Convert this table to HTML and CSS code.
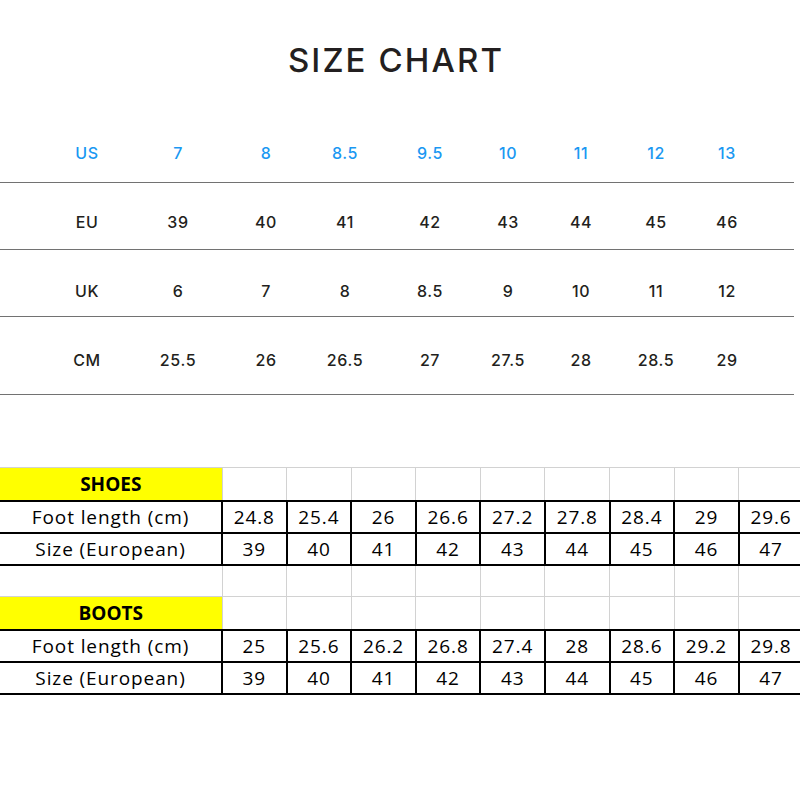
FILE: index.html
```html
<!DOCTYPE html>
<html lang="en">
<head>
<meta charset="utf-8">
<title>Size Chart</title>
<link rel="stylesheet" href="styles.css">
</head>
<body>
<main class="page">
  <h1 class="title">SIZE CHART</h1>

  <section class="chart">
    <div class="row row-us">
      <span>US</span><span>7</span><span>8</span><span>8.5</span><span>9.5</span><span>10</span><span>11</span><span>12</span><span>13</span>
    </div>
    <div class="row row-eu">
      <span>EU</span><span>39</span><span>40</span><span>41</span><span>42</span><span>43</span><span>44</span><span>45</span><span>46</span>
    </div>
    <div class="row row-uk">
      <span>UK</span><span>6</span><span>7</span><span>8</span><span>8.5</span><span>9</span><span>10</span><span>11</span><span>12</span>
    </div>
    <div class="row row-cm">
      <span>CM</span><span>25.5</span><span>26</span><span>26.5</span><span>27</span><span>27.5</span><span>28</span><span>28.5</span><span>29</span>
    </div>
  </section>

  <table class="sheet">
    <colgroup>
      <col class="c-label">
      <col class="c-val"><col class="c-val"><col class="c-val"><col class="c-val"><col class="c-val"><col class="c-val"><col class="c-val"><col class="c-val"><col class="c-val">
    </colgroup>
    <tbody>
      <tr class="r-head">
        <th class="tag">SHOES</th>
        <td></td><td></td><td></td><td></td><td></td><td></td><td></td><td></td><td></td>
      </tr>
      <tr class="r-data r1">
        <td class="d label">Foot length (cm)</td>
        <td class="d">24.8</td><td class="d">25.4</td><td class="d">26</td><td class="d">26.6</td><td class="d">27.2</td><td class="d">27.8</td><td class="d">28.4</td><td class="d">29</td><td class="d">29.6</td>
      </tr>
      <tr class="r-data r2">
        <td class="d label">Size (European)</td>
        <td class="d">39</td><td class="d">40</td><td class="d">41</td><td class="d">42</td><td class="d">43</td><td class="d">44</td><td class="d">45</td><td class="d">46</td><td class="d">47</td>
      </tr>
      <tr class="r-blank">
        <td class="blank-label"></td>
        <td></td><td></td><td></td><td></td><td></td><td></td><td></td><td></td><td></td>
      </tr>
      <tr class="r-head">
        <th class="tag">BOOTS</th>
        <td></td><td></td><td></td><td></td><td></td><td></td><td></td><td></td><td></td>
      </tr>
      <tr class="r-data r1">
        <td class="d label">Foot length (cm)</td>
        <td class="d">25</td><td class="d">25.6</td><td class="d">26.2</td><td class="d">26.8</td><td class="d">27.4</td><td class="d">28</td><td class="d">28.6</td><td class="d">29.2</td><td class="d">29.8</td>
      </tr>
      <tr class="r-data r2">
        <td class="d label">Size (European)</td>
        <td class="d">39</td><td class="d">40</td><td class="d">41</td><td class="d">42</td><td class="d">43</td><td class="d">44</td><td class="d">45</td><td class="d">46</td><td class="d">47</td>
      </tr>
    </tbody>
  </table>
</main>
</body>
</html>
```

FILE: styles.css
```css
html, body {
  margin: 0;
  padding: 0;
  background: #ffffff;
  overflow: hidden;
}

.page {
  width: 800px;
  height: 800px;
  overflow: hidden;
}

.title {
  margin: 0;
  padding-top: 40px;
  height: 40px;
  line-height: 40px;
  text-align: center;
  font-family: "Inter", "Noto Sans", sans-serif;
  font-weight: 500;
  font-size: 33px;
  letter-spacing: 2.1px;
  color: #231f20;
  padding-right: 8px;
}

.chart {
  margin-top: 44px;
  width: 794px;
  font-family: "Inter", "Noto Sans", sans-serif;
  font-size: 16px;
  font-weight: 500;
  letter-spacing: 0.6px;
  color: #231f20;
}

.row {
  display: grid;
  grid-template-columns: 80px 102px 74px 84px 86px 70px 76px 74px 68px;
  padding-left: 47px;
  align-items: center;
  justify-items: center;
  border-bottom: 1px solid #727272;
  box-sizing: border-box;
}

.row-us {
  height: 59px;
  color: #1a98f2;
}

.row-eu {
  height: 67px;
  padding-top: 12px;
}

.row-uk {
  height: 67px;
  padding-top: 16px;
}

.row-cm {
  height: 78px;
  padding-top: 9px;
}

.sheet {
  margin-top: 72px;
  border-collapse: collapse;
  table-layout: fixed;
  width: 804px;
  font-family: "Open Sans", "Noto Sans", sans-serif;
  font-size: 19px;
  letter-spacing: 0.9px;
  color: #000000;
}

.c-label { width: 222px; }
.c-val { width: 64.6px; }

.sheet td,
.sheet th {
  border: 1px solid #d2d2d2;
  padding: 0;
  text-align: center;
  line-height: 20px;
}

.sheet td:first-child,
.sheet th:first-child {
  border-left: none;
}

.r-head { height: 33px; }
.r-data { height: 32px; }
.r-blank { height: 32px; }

.tag {
  background: #ffff00;
  font-weight: 700;
  font-size: 19px;
  letter-spacing: 0;
  padding-top: 5px;
}

.sheet td.d {
  border: 2px solid #000000;
}

.sheet td.d.label {
  border-left: none;
}

.blank-label {
  border-left: none;
}
```
